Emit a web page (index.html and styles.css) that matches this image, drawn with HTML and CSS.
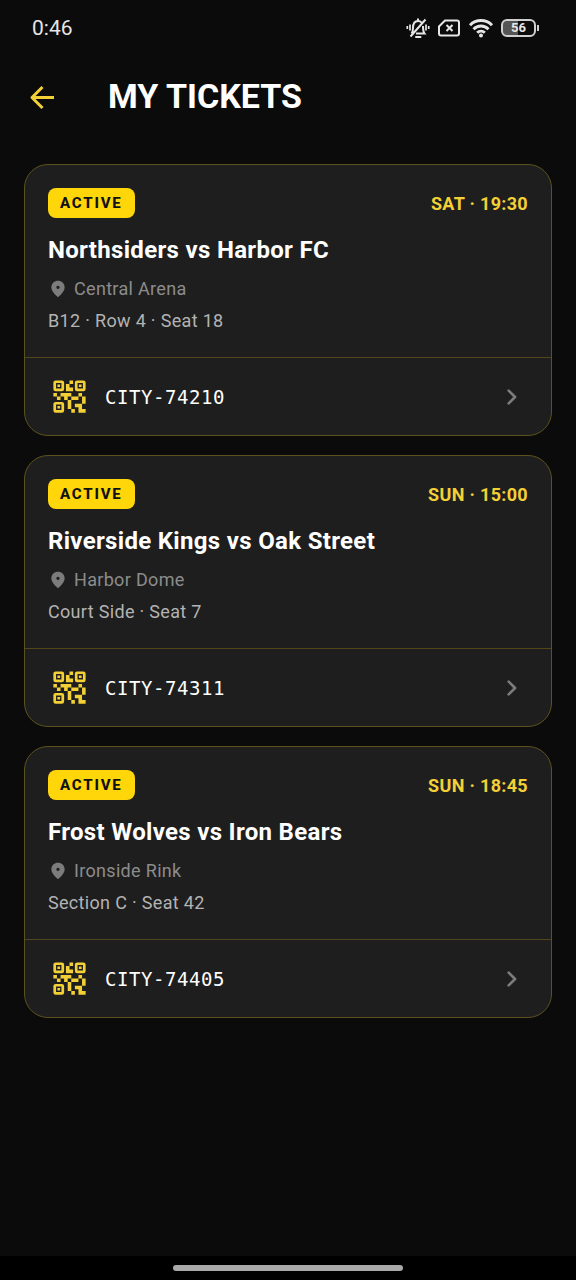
FILE: index.html
```html
<!DOCTYPE html>
<html lang="en">
<head>
<meta charset="utf-8">
<meta name="viewport" content="width=device-width, initial-scale=1">
<title>My Tickets</title>
<link rel="stylesheet" href="styles.css">
</head>
<body>
<svg class="sprite" aria-hidden="true">
  <symbol id="pin" viewBox="0 0 24 24">
    <path fill="currentColor" fill-rule="evenodd" d="M12 2C7.800 2 4 5.220 4 10.200c0 3.180 2.450 6.920 7.340 11.230.380.330.950.330 1.330 0C17.550 17.120 20 13.380 20 10.200 20 5.220 16.200 2 12 2zm0 10a2 2 0 1 1 0-4 2 2 0 0 1 0 4z"/>
  </symbol>
  <symbol id="chevron" viewBox="0 0 24 24">
    <path fill="none" stroke="currentColor" stroke-width="2" stroke-linecap="round" stroke-linejoin="round" d="M9.500 7.200 14.300 12 9.500 16.800"/>
  </symbol>
  <symbol id="qr" viewBox="0 0 24 24">
    <g fill="none" stroke="currentColor" stroke-width="1.500">
      <rect x="3.750" y="3.750" width="4.500" height="4.500" rx=".5"/>
      <rect x="15.750" y="3.750" width="4.500" height="4.500" rx=".5"/>
      <rect x="3.750" y="15.750" width="4.500" height="4.500" rx=".5"/>
    </g>
    <path fill="currentColor" d="M15 21h-2v-2h2v2zm-2-7h-2v5h2v-5zm8-2h-2v4h2v-4zm-2-2h-2v2h2v-2zM7 12H5v2h2v-2zm-2-2H3v2h2v-2zm7-5h2V3h-2v2zm7 14v-3h-4v2h2v3h4v-2h-2zm-2-7h-4v2h4v-2zm-4-2H7v2h2v2h2v-2h2v-2zm1-1V7h-2V5h-2v4h4zM6.750 5.250h-1.500v1.500h1.500v-1.500zm0 12h-1.500v1.500h1.500v-1.500zm12-12h-1.500v1.500h1.500v-1.500z"/>
  </symbol>
</svg>

<div class="app">
  <div class="status">
    <time class="clock">0:46</time>
    <div class="indicators">
      <svg width="24" height="24" viewBox="0 0 24 24" fill="none" stroke="currentColor" stroke-width="2" aria-label="Muted">
        <path d="M5.500 17.500c1.200-1.200 1.500-3 1.500-5.500 0-4 1.500-7 5-7 1.500 0 2.700.5 3.500 1.500M17 10c0 4 .3 6 1.500 7.500H10M4.500 20.500 19.500 3.500M12 5V2.500"/>
        <path d="M10 21h4.500" stroke-linecap="round"/>
        <path d="M4 8.500v6M1.300 10v3M20 8.500v6M22.700 10v3" stroke-width="1.700"/>
      </svg>
      <svg width="24" height="20" viewBox="0 0 24 20" fill="none" stroke="currentColor" stroke-width="2" aria-label="No SIM">
        <path d="M8 2.500h12a2 2 0 0 1 2 2v11a2 2 0 0 1-2 2H4a2 2 0 0 1-2-2V8.500z"/>
        <path d="m9.500 7 6 6m0-6-6 6"/>
      </svg>
      <svg width="26" height="20" viewBox="0 0 26 20" fill="none" stroke="currentColor" stroke-width="3" aria-label="Wi-Fi">
        <path d="M2 7.200a15.500 15.500 0 0 1 22 0M5.500 11.200a10.600 10.600 0 0 1 15 0M9.200 14.800a5.400 5.400 0 0 1 7.600 0"/>
        <circle cx="13" cy="17.500" r="2" fill="currentColor" stroke="none"/>
      </svg>
      <span class="battery">56</span>
    </div>
  </div>

  <header class="header">
    <button class="back" type="button" aria-label="Back">
      <svg width="32" height="32" viewBox="0 0 32 32" fill="none" stroke="currentColor" stroke-width="3" stroke-linejoin="round">
        <path d="M16.500 7 6 17.500 16.500 28M6 17.500h22"/>
      </svg>
    </button>
    <h1 class="heading">MY TICKETS</h1>
  </header>

  <main class="tickets">
    <article class="ticket">
      <div class="details">
        <div class="topline"><span class="badge">ACTIVE</span><time class="when">SAT · 19:30</time></div>
        <h2 class="match">Northsiders vs Harbor FC</h2>
        <p class="venue"><svg class="pin" aria-hidden="true"><use href="#pin"/></svg>Central Arena</p>
        <p class="seat">B12 · Row 4 · Seat 18</p>
      </div>
      <a class="pass" href="#CITY-74210"><svg class="qr" aria-hidden="true"><use href="#qr"/></svg><span class="code">CITY-74210</span><svg class="chevron" aria-hidden="true"><use href="#chevron"/></svg></a>
    </article>

    <article class="ticket">
      <div class="details">
        <div class="topline"><span class="badge">ACTIVE</span><time class="when">SUN · 15:00</time></div>
        <h2 class="match">Riverside Kings vs Oak Street</h2>
        <p class="venue"><svg class="pin" aria-hidden="true"><use href="#pin"/></svg>Harbor Dome</p>
        <p class="seat">Court Side · Seat 7</p>
      </div>
      <a class="pass" href="#CITY-74311"><svg class="qr" aria-hidden="true"><use href="#qr"/></svg><span class="code">CITY-74311</span><svg class="chevron" aria-hidden="true"><use href="#chevron"/></svg></a>
    </article>

    <article class="ticket">
      <div class="details">
        <div class="topline"><span class="badge">ACTIVE</span><time class="when">SUN · 18:45</time></div>
        <h2 class="match">Frost Wolves vs Iron Bears</h2>
        <p class="venue"><svg class="pin" aria-hidden="true"><use href="#pin"/></svg>Ironside Rink</p>
        <p class="seat">Section C · Seat 42</p>
      </div>
      <a class="pass" href="#CITY-74405"><svg class="qr" aria-hidden="true"><use href="#qr"/></svg><span class="code">CITY-74405</span><svg class="chevron" aria-hidden="true"><use href="#chevron"/></svg></a>
    </article>
  </main>

  <div class="gesture"><span class="handle"></span></div>
</div>
</body>
</html>
```

FILE: styles.css
```css
:root {
  --bg: #0b0b0b;
  --card: #1e1e1e;
  --edge: #5c521e;
  --line: #50461a;
  --yellow: #ffd60a;
  --gold: #f3d036;
}

* { box-sizing: border-box; }

body {
  margin: 0;
  background: var(--bg);
  color: #fff;
  font-family: Roboto, "Liberation Sans", sans-serif;
}

h1, h2, p { margin: 0; }
svg { display: block; flex: none; }
.sprite { display: none; }

.app {
  display: flex;
  flex-direction: column;
  min-height: 100vh;
}

.status {
  display: flex;
  align-items: center;
  justify-content: space-between;
  height: 56px;
  padding: 0 37px 0 32px;
  color: #e6e6e6;
}

.clock { font-size: 21px; line-height: 24px; }

.indicators {
  display: flex;
  align-items: center;
  gap: 7px;
}

.battery {
  position: relative;
  width: 35px;
  height: 18px;
  margin-right: 3px;
  border: 2px solid #d0d0d0;
  border-radius: 6px;
  background: linear-gradient(90deg, #555 50%, transparent 50%);
  font-size: 13px;
  font-weight: 700;
  line-height: 14px;
  text-align: center;
}

.battery::after {
  content: "";
  position: absolute;
  top: 4px;
  right: -5px;
  width: 2px;
  height: 6px;
  background: #d0d0d0;
}

.header {
  display: flex;
  align-items: center;
  gap: 50px;
  height: 80px;
  padding: 0 26px;
}

.back {
  padding: 0;
  border: 0;
  background: none;
  color: var(--gold);
}

.heading {
  font-size: 34px;
  font-weight: 700;
  line-height: 40px;
}

.tickets {
  display: flex;
  flex: 1;
  flex-direction: column;
  gap: 19px;
  padding: 28px 24px;
}

.ticket {
  overflow: hidden;
  border: 1px solid var(--edge);
  border-radius: 24px;
  background: var(--card);
}

.details {
  padding: 23px 23px 24px;
  letter-spacing: 0.02em;
}

.topline {
  display: flex;
  align-items: center;
  justify-content: space-between;
}

.badge {
  padding: 0 12px;
  border-radius: 8px;
  background: var(--yellow);
  color: #111;
  font-size: 15px;
  font-weight: 800;
  line-height: 30px;
  letter-spacing: 0.12em;
}

.when {
  color: var(--gold);
  font-size: 18px;
  font-weight: 700;
}

.match {
  margin-top: 16px;
  font-size: 24px;
  font-weight: 700;
  line-height: 32px;
}

.venue {
  display: flex;
  align-items: center;
  gap: 6px;
  margin-top: 11px;
  color: #8c8c8c;
  font-size: 18px;
  line-height: 24px;
}

.pin { width: 20px; height: 20px; color: #7c7c7c; }

.seat {
  margin-top: 8px;
  color: #b3b3b3;
  font-size: 18px;
  line-height: 24px;
}

.pass {
  display: flex;
  align-items: center;
  gap: 14px;
  padding: 17px 23px;
  border-top: 1px solid var(--line);
  color: #fff;
  text-decoration: none;
}

.qr { width: 43px; height: 43px; color: var(--gold); }

.code {
  flex: 1;
  font-family: "DejaVu Sans Mono", monospace;
  font-size: 19px;
  line-height: 24px;
  letter-spacing: 0.03em;
}

.chevron { width: 32px; height: 32px; color: #7c7c7c; }

.gesture {
  display: flex;
  align-items: center;
  justify-content: center;
  height: 24px;
  background: #000;
}

.handle {
  width: 40%;
  height: 6px;
  border-radius: 3px;
  background: #a9a9a9;
}
```
